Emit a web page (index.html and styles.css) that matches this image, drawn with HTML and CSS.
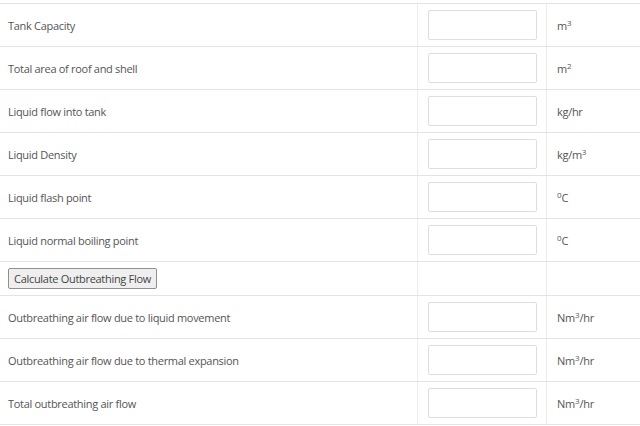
FILE: index.html
```html
<!DOCTYPE html>
<html>
<head>
<meta charset="utf-8">
<link rel="stylesheet" href="styles.css">
</head>
<body>
<table class="calc">
  <tr><td class="label">Tank Capacity</td><td class="field"><input type="text" class="box"></td><td class="unit">m<sup>3</sup></td></tr>
  <tr><td class="label">Total area of roof and shell</td><td class="field"><input type="text" class="box"></td><td class="unit">m<sup>2</sup></td></tr>
  <tr><td class="label">Liquid flow into tank</td><td class="field"><input type="text" class="box"></td><td class="unit">kg/hr</td></tr>
  <tr><td class="label">Liquid Density</td><td class="field"><input type="text" class="box"></td><td class="unit">kg/m<sup>3</sup></td></tr>
  <tr><td class="label">Liquid flash point</td><td class="field"><input type="text" class="box"></td><td class="unit"><sup>0</sup>C</td></tr>
  <tr><td class="label">Liquid normal boiling point</td><td class="field"><input type="text" class="box"></td><td class="unit"><sup>0</sup>C</td></tr>
  <tr class="btnrow"><td class="label"><button class="calc-btn">Calculate Outbreathing Flow</button></td><td class="field"></td><td class="unit"></td></tr>
  <tr><td class="label">Outbreathing air flow due to liquid movement</td><td class="field"><input type="text" class="box"></td><td class="unit">Nm<sup>3</sup>/hr</td></tr>
  <tr><td class="label">Outbreathing air flow due to thermal expansion</td><td class="field"><input type="text" class="box"></td><td class="unit">Nm<sup>3</sup>/hr</td></tr>
  <tr><td class="label">Total outbreathing air flow</td><td class="field"><input type="text" class="box"></td><td class="unit">Nm<sup>3</sup>/hr</td></tr>
</table>
</body>
</html>
```

FILE: styles.css
```css
html, body {
  margin: 0;
  padding: 0;
  background: #fff;
}
body {
  font-family: "Open Sans", "Liberation Sans", sans-serif;
  font-size: 11px;
  color: #555;
}
.calc {
  margin-top: 3px;
  width: 640px;
  border-collapse: collapse;
  table-layout: fixed;
}
.calc td {
  border-top: 1px solid #e3e3e3;
  border-bottom: 1px solid #e3e3e3;
  padding: 6px 8px;
  height: 30px;
  vertical-align: middle;
  box-sizing: content-box;
  letter-spacing: -0.3px;
}
.calc td.label {
  width: 401px;
  padding-left: 8px;
}
.calc td.field {
  width: 109px;
  padding: 6px 9px 6px 10px;
  border-left: 1px solid #ececec;
  border-right: 1px solid #ececec;
}
.calc td.unit {
  padding-left: 10px;
}
.calc .btnrow td {
  height: 21px;
}
.box {
  display: block;
  width: 109px;
  height: 30px;
  box-sizing: border-box;
  border: 1px solid #dedede;
  border-radius: 2px;
  background: #fff;
  margin: 0;
  padding: 0;
}
.calc-btn {
  display: block;
  height: 21px;
  width: 149px;
  margin: 0;
  padding: 0 4px;
  font-family: "Open Sans", "Liberation Sans", sans-serif;
  font-size: 11px;
  letter-spacing: -0.3px;
  color: #444;
  background: #efefef;
  border: 1px solid #8f8f8f;
  border-radius: 2px;
}
sup {
  font-size: 8px;
  line-height: 0;
  vertical-align: 4px;
  letter-spacing: 0;
}
```
